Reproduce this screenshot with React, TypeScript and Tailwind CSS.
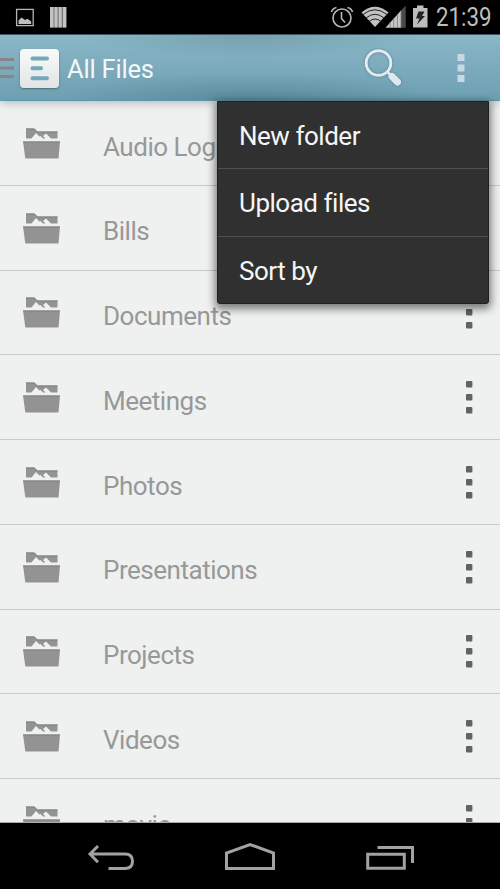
import React from "react";

const folders = [
  "Audio Logs",
  "Bills",
  "Documents",
  "Meetings",
  "Photos",
  "Presentations",
  "Projects",
  "Videos",
  "movie",
];

function FolderIcon() {
  return (
    <svg width="38" height="31" viewBox="0 0 38 31" className="mt-[1px] shrink-0">
      <path d="M4 .5H12.500L15.500 3.500H35.500V10.500H29L24 5.500L21 8L23.500 10.500H21L18.500 8L17.500 8.500L14 5L9.500 10.500H4Z" fill="#939393" />
      <path d="M1 13.500H38L36.500 30.500H3.300Z" fill="#939393" />
      <path d="M1.200 14H37.800M4 1H12.300L15.300 4H35.500" fill="none" stroke="#7f8080" strokeWidth="1" />
    </svg>
  );
}

function RowDots() {
  return (
    <svg width="8" height="34" viewBox="0 0 8 34" fill="#626262">
      <rect x="1" y="1" width="6.400" height="6.400" rx="1" />
      <rect x="1" y="14" width="6.400" height="6.400" rx="1" />
      <rect x="1" y="27" width="6.400" height="6.400" rx="1" />
    </svg>
  );
}

function StatusBar() {
  return (
    <div className="flex h-[34px] shrink-0 items-center bg-black">
      <svg width="500" height="34" viewBox="0 0 500 34">
        <rect x="16.600" y="9.400" width="16.600" height="16.200" fill="none" stroke="#b5b5b5" strokeWidth="1.300" />
        <path d="M18.500 24V20.500L21.500 17.500L25 20L27.500 18.800L31.200 21.500V24Z" fill="#bdbdbd" />
        <path d="M50 7H66.700V27.500H50Z" fill="#777" />
        <path d="M50 7h3.500v20.500h-3.500zM54.500 7h3v20.500h-3zM58.700 7h3v20.500h-3zM63 7h3v20.500h-3z" fill="#c3c3c3" />
        <g fill="none" stroke="#b9b9b9" strokeWidth="1.600">
          <circle cx="342" cy="18" r="9" />
          <path d="M341.500 12V18.500L345 22.500M331.500 12Q332.500 8.500 336.500 7.500M347.500 7.500Q351.500 8.500 352.500 12" />
        </g>
        <path d="M361.500 12.500Q375 .8 388.500 12.500L375 27Z" fill="#c2c2c2" />
        <g fill="none" stroke="#222" strokeWidth="1">
          <path d="M363 14.500Q375 5 387 14.500M366 18Q375 10.500 384 18M369 21.500Q375 16.500 381 21.500" />
        </g>
        <path d="M405.700 5.500V27.800H401V10.500Z" fill="#4a4a4a" />
        <path d="M385.500 27.800L401 10.500V27.800Z" fill="#c8c8c8" />
        <path d="M390 22V28M393.700 18V28M397.400 14V28M401 10.500V28" stroke="#777" strokeWidth=".8" />
        <path d="M413 8H417V5.500H423.500V8H427.500V27.500H413Z" fill="#bdbdbd" />
        <path d="M418.500 11.500H424.500L422 16H425L417 24.500L419.500 18.500H416Z" fill="#222" />
        <text x="436" y="26.300" textLength="55.500" lengthAdjust="spacingAndGlyphs" fill="#bebebe" className="font-['Roboto',sans-serif] text-[25px]">21:39</text>
      </svg>
    </div>
  );
}

function ActionBar() {
  return (
    <header className="relative z-10 flex h-[67px] shrink-0 items-center border-t border-b border-t-[#3e555f] border-b-[#5e98ac] bg-linear-to-b from-[#8bb7c7] to-[#6d9fb2] pt-[1px] shadow-[0_1px_9px_rgba(0,0,0,0.28)]">
      <div className="absolute inset-0 bg-[radial-gradient(ellipse_170px_22px_at_50%_0%,rgba(35,70,85,.2),transparent),radial-gradient(ellipse_190px_28px_at_50%_100%,rgba(35,70,85,.25),transparent)]" />
      <svg width="14" height="22" viewBox="0 0 14 22" className="relative">
        <path d="M0 2.500H14M0 11H14M0 19.500H14" stroke="#85858a" strokeWidth="3.200" />
      </svg>
      <div className="relative ml-[6px] flex h-[39px] w-[39px] items-center justify-center rounded-[4px] bg-linear-to-b from-[#fafafa] to-[#e2e4e5] shadow-[0_1px_2px_#4c6e7c]">
        <svg width="20" height="25" viewBox="0 0 20 25">
          <path d="M2.500 2.500H17M2.500 12.200H11M2.500 22.300H17" stroke="#73a8bb" strokeWidth="4" strokeLinecap="round" />
        </svg>
      </div>
      <h1 className="relative ml-[8px] pt-[1px] font-['Roboto',sans-serif] text-[25.500px] leading-[32px] tracking-[-0.2px] text-[#f5f8f9]">All Files</h1>
      <svg width="44" height="44" viewBox="0 0 44 44" className="relative ml-auto mr-[54px]">
        <g className="drop-shadow-[0_0_1px_#4c7788]">
          <circle cx="19.500" cy="17" r="12.300" fill="none" stroke="#dfebef" strokeWidth="3" />
          <path d="M28 25.500L31.500 29" stroke="#dfebef" strokeWidth="3" />
          <path d="M33 30.500L38.500 36" stroke="#dce9ed" strokeWidth="7" strokeLinecap="round" />
        </g>
      </svg>
      <svg width="8" height="30" viewBox="0 0 8 30" className="relative mr-[35px]" fill="#c6dae1">
        <path d="M.5 1h7v7h-7zM.5 11.500h7v7h-7zM.5 22h7v7h-7z" />
      </svg>
    </header>
  );
}

function OverflowMenu() {
  return (
    <div className="absolute left-[217px] top-[101px] z-20 w-[272px] rounded-b-[3px] border border-[#202020] bg-[#303030] font-['Roboto',sans-serif] text-[26px] leading-[32px] tracking-[-0.48px] text-[#f6f6f6] shadow-[0_3px_8px_2px_rgba(0,0,0,0.5)]">
      <div className="flex h-[67px] items-center border-b border-[#505050] pl-[21px] pt-[2px]">New folder</div>
      <div className="flex h-[68px] items-center border-b border-[#505050] pl-[21px]">Upload files</div>
      <div className="flex h-[66px] items-center pl-[21px] pt-[1px]">Sort by</div>
    </div>
  );
}

function NavBar() {
  return (
    <nav className="flex h-[66px] shrink-0 bg-black">
      <svg width="500" height="66" viewBox="0 823 500 66" fill="none" stroke="#a2a2a2" strokeWidth="3">
        <path d="M98 846L90 854L98 862.300M90 854H125Q132.500 854 132.500 861.300Q132.500 868.500 125 868.500H108.500" />
        <path d="M226.500 868.500V853L250 844.500L273.500 853V868.500Z" />
        <path d="M367.700 854.300H404.300V868.300H367.700ZM377.500 847.500H412.500V863" />
      </svg>
    </nav>
  );
}

export default function App() {
  return (
    <div className="relative flex h-[889px] w-[500px] flex-col overflow-hidden bg-black">
      <StatusBar />
      <ActionBar />
      <main className="h-[722px] shrink-0 overflow-hidden border-b border-[#a9aaaa] bg-[#eff1f1]">
        {folders.map((name) => (
          <div key={name} className="flex h-[84.750px] items-center border-b border-[#c9cbcb] pl-[22px] pr-[27px]">
            <FolderIcon />
            <span className="ml-[43px] mr-auto pt-[7.400px] font-['Roboto',sans-serif] text-[26px] leading-[32px] tracking-[-0.48px] text-[#979898]">{name}</span>
            <RowDots />
          </div>
        ))}
      </main>
      <NavBar />
      <OverflowMenu />
    </div>
  );
}
